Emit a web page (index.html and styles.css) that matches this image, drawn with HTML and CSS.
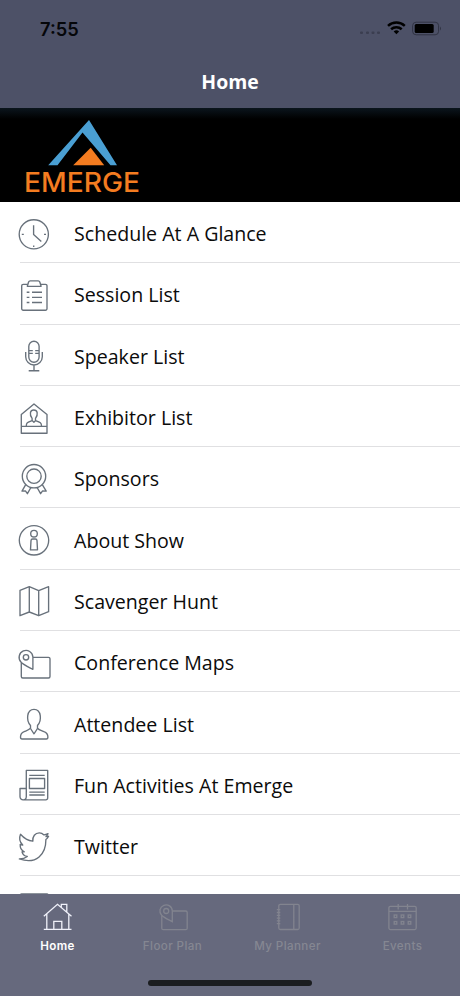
FILE: index.html
```html
<!DOCTYPE html>
<html lang="en">
<head>
  <meta charset="UTF-8">
  <meta name="viewport" content="width=device-width, initial-scale=1.0">
  <title>Home</title>
  <link rel="stylesheet" href="styles.css">
</head>
<body>
  <header class="header">
    <div class="status-bar">
      <span class="time">7:55</span>
      <svg class="status-icons" width="84" height="20" viewBox="0 0 84 20">
        <g class="dots">
          <rect x="2" y="12.5" width="3" height="2.600" rx="1"/>
          <rect x="8" y="12.5" width="3" height="2.600" rx="1"/>
          <rect x="13.500" y="12.5" width="3" height="2.600" rx="1"/>
          <rect x="19" y="12.5" width="3" height="2.600" rx="1"/>
        </g>
        <g class="wifi">
          <path d="M30 6.800a12.400 12.400 0 0 1 16.800 0"/>
          <path d="M33.100 10.200a7.900 7.900 0 0 1 10.600 0"/>
          <path class="wifi-dot" d="M35.700 12.500a4 4 0 0 1 5.400 0l-2.700 2.800z"/>
        </g>
        <rect class="battery" x="54.600" y="3.200" width="26" height="12.600" rx="3.500"/>
        <rect x="56.700" y="5.100" width="19" height="8.800" rx="1.500"/>
        <path class="battery-tip" d="M82 7.500q2 2 0 4z"/>
      </svg>
    </div>
    <h1 class="title">Home</h1>
  </header>

  <div class="banner">
    <svg width="118" height="78" viewBox="0 0 118 78">
      <path class="logo-blue" d="M65 0L93 45.200H86.500L58.500 12.500 33.500 45.200H24.200z"/>
      <path class="logo-orange" d="M66.700 27.800L80.200 45.200H49.200z"/>
      <text class="logo-text" x="0" y="71.700" textLength="116" lengthAdjust="spacingAndGlyphs">EMERGE</text>
    </svg>
  </div>

  <main class="menu">
    <a class="row">
      <svg class="icon" viewBox="0 0 36 36">
        <circle cx="17.8" cy="18.300" r="14.600"/>
        <path d="M17.600 9.200v9.300l7.700 7M5.800 18.300h2M28 18.300h2M17.700 29.500v1.500"/>
      </svg>
      <span class="label">Schedule At A Glance</span>
    </a>
    <a class="row">
      <svg class="icon" viewBox="0 0 36 36">
        <path d="M11.800 7.300H7.200a1.500 1.500 0 0 0-1.500 1.500v22.900a1.500 1.500 0 0 0 1.500 1.500h22.300a1.500 1.500 0 0 0 1.500-1.500V8.800a1.500 1.500 0 0 0-1.500-1.500h-4.800"/>
        <path d="M11.300 9.300l1.300-4.300q.4-1.200 1.600-1.200h8q1.200 0 1.600 1.200l1.300 4.300z"/>
        <path d="M10.700 15.200h2.700M16 15.200h10M10.700 20.300h2.700M16 20.300h10M10.700 25.500h2.700M16 25.500h10"/>
      </svg>
      <span class="label">Session List</span>
    </a>
    <a class="row">
      <svg class="icon" viewBox="0 0 36 36">
        <rect x="12.800" y="3.200" width="10.300" height="21" rx="5.150"/>
        <path d="M9.700 14v4.700a8.300 8.300 0 0 0 16.600 0V14M18 27.200v5.500M12.700 32.700h10.600"/>
        <path d="M13 12.600h3.800M19.200 12.600H23M13 15.400h3.800M19.200 15.400H23"/>
      </svg>
      <span class="label">Speaker List</span>
    </a>
    <a class="row">
      <svg class="icon" viewBox="0 0 36 36">
        <path d="M5.300 33.200V14.600L18 3.900l13 10.700v18.600zM5.300 26.300H31"/>
        <path d="M10.300 26c0-3.200.8-3.600 5.800-5.400v-2.300c-3-4-2-8.300 1.700-8.300s4.700 4.300 1.700 8.300v2.300c5 1.800 6 2.200 6 5.400M16.100 20.600l1.800 1.600 1.800-1.600"/>
      </svg>
      <span class="label">Exhibitor List</span>
    </a>
    <a class="row">
      <svg class="icon" viewBox="0 0 36 36">
        <circle cx="18" cy="15.200" r="11.700"/>
        <circle cx="18" cy="15.200" r="7.200"/>
        <path d="M9.700 23.600L6 30.100l3.400-.2 2 2.800 3.500-6.200M26.300 23.600l3.900 6.500-3.600-.2-2 2.800-3.500-6.200"/>
      </svg>
      <span class="label">Sponsors</span>
    </a>
    <a class="row">
      <svg class="icon" viewBox="0 0 36 36">
        <circle cx="18" cy="18.300" r="14.700"/>
        <circle cx="18" cy="11.700" r="3.300"/>
        <path d="M14.500 27.900l.5-9.300q.1-1.600 1.600-1.600h2.800q1.500 0 1.600 1.600l.5 9.300z"/>
      </svg>
      <span class="label">About Show</span>
    </a>
    <a class="row">
      <svg class="icon" viewBox="0 0 36 36">
        <path d="M4 7.300l9.300-3.600 9.400 4 9.900-4v25l-9.900 4-9.400-3.700L4 32.700zM13.300 3.700V29M22.700 7.700v25"/>
      </svg>
      <span class="label">Scavenger Hunt</span>
    </a>
    <a class="row">
      <svg class="icon" viewBox="0 0 36 36">
        <path d="M16.900 24.300V12a6.900 6.900 0 1 0-12 5c2 2.600 7 4.800 12 7.300z"/>
        <circle cx="10" cy="12.300" r="2.700"/>
        <path d="M17 12.300h15.500A1.500 1.500 0 0 1 34 13.800v17.700a1.500 1.500 0 0 1-1.500 1.500H6.800a1.500 1.500 0 0 1-1.500-1.500V18"/>
      </svg>
      <span class="label">Conference Maps</span>
    </a>
    <a class="row">
      <svg class="icon" viewBox="0 0 36 36">
        <path d="M14.500 19.500c-4.500-5-4-16.100 3.500-16.100s8 11.100 3.500 16.100v2.700c1.500 1.700 3.700 2.200 6.500 3.400 3 1.200 3.900 2.500 3.900 5.400q0 2-1.500 2H6q-1.500 0-1.500-2c0-2.900.7-4.200 3.700-5.400 3-1.200 5-1.700 6.300-3.400z"/>
        <path d="M14.500 22.500L18 27.800l3.500-5.300"/>
      </svg>
      <span class="label">Attendee List</span>
    </a>
    <a class="row">
      <svg class="icon" viewBox="0 0 36 36">
        <path d="M10.300 30V3.400h21.400V31a1.800 1.800 0 0 1-1.800 1.800H7.200A3.100 3.100 0 0 1 4 29.700v-8.200h6.300M10.300 29.500q0 3.300-3 3.300"/>
        <rect x="13.400" y="11.500" width="15.200" height="10"/>
        <path d="M13.300 8.400h15.400M13.300 25.100h15.400M13.300 28h15.400"/>
      </svg>
      <span class="label">Fun Activities At Emerge</span>
    </a>
    <a class="row">
      <svg class="icon" viewBox="0 0 36 36">
        <path d="M4.500 5.300c3.500 4 7.500 6.400 12.300 6.900-.4-4.700 2.300-8.400 6.500-8.400 2 0 3.400.8 4.700 2.100 1.500-.2 2.800-.7 4-1.300-.3 1.300-1 2.200-2 3 1 0 1.800-.1 2.600-.3-.7 1.300-1.500 2.300-2.700 3.200C30 25 20.500 36 3.300 29.900c3 0 5.700-.6 8-2.400-2.700-.4-4.700-2.200-5.300-4.700h2.300C5.500 21.500 4 18.500 4.200 15.500l2.500.6C3.800 13.200 3 9 4.500 5.300z"/>
      </svg>
      <span class="label">Twitter</span>
    </a>
    <a class="row">
      <svg class="icon" viewBox="0 0 36 36">
        <rect x="4.500" y="4" width="27.500" height="27" rx="1"/>
      </svg>
    </a>
  </main>

  <nav class="tab-bar">
    <a class="tab active">
      <svg class="tab-icon" viewBox="0 0 36 36">
        <path d="M6.800 15v15.300M28.800 15v15.300M3.800 30.300h27.700M3.800 17.300l13.700-12 14 12M13.800 30v-7.700h8V30M21.300 8.300v-3h5.500v7.500"/>
      </svg>
      <span>Home</span>
    </a>
    <a class="tab">
      <svg class="tab-icon" viewBox="0 0 36 36">
        <path d="M17.300 22.700V12a6.200 6.200 0 1 0-10.700 4.300c2 2.200 6.500 4.200 10.700 6.400z"/>
        <circle cx="11.200" cy="12" r="2.500"/>
        <path d="M17.500 12h13.200a1.500 1.500 0 0 1 1.500 1.500v15.700a1.500 1.500 0 0 1-1.500 1.500H8.300a1.500 1.500 0 0 1-1.500-1.500V17"/>
      </svg>
      <span>Floor Plan</span>
    </a>
    <a class="tab">
      <svg class="tab-icon" viewBox="0 0 36 36">
        <rect x="8.800" y="5.300" width="20.400" height="25.200" rx="1.500"/>
        <path d="M23.800 5.300v25.200M6.800 10.700h3.500M6.800 13.500h3.500M6.800 16.300h3.500M6.800 19.100h3.500M6.800 21.900h3.500M6.800 24.700h3.500"/>
      </svg>
      <span>My Planner</span>
    </a>
    <a class="tab">
      <svg class="tab-icon" viewBox="0 0 36 36">
        <rect x="3.900" y="7.300" width="27.300" height="23.300" rx="1.500"/>
        <path d="M3.900 12.300h27.300M13.200 5v5.500M22.500 5v5.500"/>
        <g class="days">
          <rect x="9.200" y="16" width="2.600" height="2.600"/>
          <rect x="16.200" y="16" width="2.600" height="2.600"/>
          <rect x="23.200" y="16" width="2.600" height="2.600"/>
          <rect x="9.200" y="22.500" width="2.600" height="2.600"/>
          <rect x="16.200" y="22.500" width="2.600" height="2.600"/>
          <rect x="23.200" y="22.500" width="2.600" height="2.600"/>
        </g>
      </svg>
      <span>Events</span>
    </a>
    <div class="home-indicator"></div>
  </nav>
</body>
</html>
```

FILE: styles.css
```css
* {
  box-sizing: border-box;
}

body {
  margin: 0;
  height: 996px;
  display: flex;
  flex-direction: column;
  overflow: hidden;
  background: #fff;
  font-family: "Open Sans", sans-serif;
}

/* Header */
.header {
  flex: none;
  height: 108px;
  background: #4d5167;
}

.status-bar {
  display: flex;
  justify-content: space-between;
  align-items: center;
  height: 56px;
  padding: 2px 18px 0 40px;
}

.time {
  font: 600 18.3px "Inter", sans-serif;
  color: #050609;
}

.status-icons {
  overflow: visible;
}

.dots {
  fill: #3b3e50;
}

.wifi path {
  fill: none;
  stroke: #000;
  stroke-width: 2.5;
}

.wifi .wifi-dot {
  fill: #000;
  stroke: none;
}

.battery {
  fill: none;
  stroke: #303343;
  stroke-width: 1;
}

.battery-tip {
  fill: #303343;
}

.title {
  margin: 13px 0 0;
  font-size: 19.4px;
  line-height: 26px;
  font-weight: 700;
  color: #fff;
  text-align: center;
}

/* Logo banner */
.banner {
  flex: none;
  height: 93.5px;
  padding: 11.5px 0 0 24px;
  background: linear-gradient(#0b151d, #000 11px);
}

.logo-blue {
  fill: #4a9fd3;
}

.logo-orange {
  fill: #f47c20;
}

.logo-text {
  font: 500 27px "Inter", sans-serif;
  fill: #f47c20;
}

/* Menu list */
.menu {
  flex: 1;
  min-height: 0;
  padding-top: 0.5px;
  overflow: hidden;
}

.row {
  display: flex;
  align-items: center;
  height: 61.3px;
  margin-left: 20px;
  border-bottom: 1px solid #e0e0e2;
}

.icon {
  flex: none;
  width: 36px;
  height: 36px;
  margin: 3px 22px 0 -4px;
  fill: none;
  stroke: #68717b;
  stroke-width: 1.35;
  stroke-linejoin: round;
}

.label {
  font-size: 19.6px;
  line-height: 28px;
  padding-top: 4px;
  color: #0b0b0b;
}

/* Bottom tabs */
.tab-bar {
  position: relative;
  flex: none;
  display: flex;
  height: 102px;
  background: #66697d;
}

.tab {
  flex: 1;
  display: flex;
  flex-direction: column;
  align-items: center;
  padding-top: 5px;
  font: 500 11.6px/16px "Inter", sans-serif;
  letter-spacing: 0.4px;
  color: #858792;
}

.tab span {
  margin-top: 3px;
}

.tab-icon {
  width: 36px;
  height: 36px;
  fill: none;
  stroke: #82848f;
  stroke-width: 1.3;
}

.active {
  font-weight: 600;
  color: #fff;
}

.active .tab-icon {
  stroke: #f0f1fa;
}

.home-indicator {
  position: absolute;
  left: 148px;
  bottom: 10px;
  width: 164px;
  height: 6px;
  border-radius: 3px;
  background: #1b1d20;
}
```
